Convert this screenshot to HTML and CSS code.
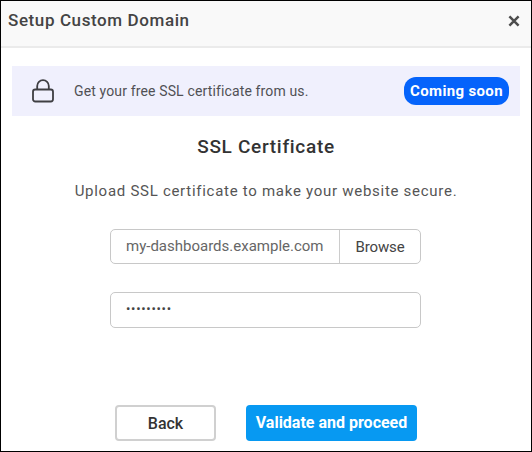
FILE: index.html
```html
<!DOCTYPE html>
<html lang="en">
<head>
<meta charset="utf-8">
<title>Setup Custom Domain</title>
<link rel="stylesheet" href="styles.css">
</head>
<body>
<div class="dialog">
  <header class="header">
    <h1 class="title">Setup Custom Domain</h1>
    <svg class="close" width="12" height="12" viewBox="0 0 12 12"><path d="M1.4 1.4 10.6 10.6M10.6 1.4 1.4 10.6"/></svg>
  </header>
  <div class="banner">
    <svg class="lock" width="22" height="24" viewBox="0 0 22 24"><rect x="1" y="10.5" width="20" height="12" rx="2.2"/><path d="M5.2 10.5V7a5.8 5.8 0 0 1 11.6 0v3.5"/></svg>
    <span class="banner-text">Get your free SSL certificate from us.</span>
    <span class="pill">Coming soon</span>
  </div>
  <h2 class="heading">SSL Certificate</h2>
  <p class="hint">Upload SSL certificate to make your website secure.</p>
  <div class="field file">
    <span class="file-name">my-dashboards.example.com</span>
    <span class="browse">Browse</span>
  </div>
  <div class="field password">•••••••••</div>
  <div class="actions">
    <button class="button back">Back</button>
    <button class="button proceed">Validate and proceed</button>
  </div>
</div>
</body>
</html>
```
FILE: styles.css
```css
* { box-sizing: border-box; }
body { margin: 0; font-family: Roboto, "Liberation Sans", sans-serif; color: #444; }
.dialog { width: 532px; height: 452px; border: 1px solid #000; background: #fff; overflow: hidden; white-space: nowrap; }
.header { height: 47px; display: flex; align-items: flex-start; justify-content: space-between; padding: 8px 11px 0 7px; background: #f9f9f9; border-bottom: 2px solid #ebebeb; }
.title { margin: 0; font-size: 17px; line-height: 22px; font-weight: 500; letter-spacing: .6px; color: #444; }
.close { margin-top: 6px; fill: none; stroke: #4d4d4d; stroke-width: 2.5; }
.banner { height: 50px; margin: 18px 11px 0; padding: 0 11px 0 20px; display: flex; align-items: center; background: #f0f0fd; }
.lock { fill: none; stroke: #3e3e42; stroke-width: 1.8; }
.banner-text { margin-left: 20px; font-size: 14px; line-height: 20px; letter-spacing: .14px; color: #505055; }
.pill { width: 105px; height: 28px; margin-left: auto; border-radius: 12px; background: #0563fb; color: #fff; font-size: 15px; line-height: 28px; font-weight: 700; letter-spacing: .35px; text-align: center; }
.heading { margin: 18px 0 0; font-size: 19px; line-height: 26px; font-weight: 500; letter-spacing: .7px; color: #333; text-align: center; }
.hint { margin: 20px 0 0; font-size: 15px; line-height: 22px; letter-spacing: .72px; color: #555; text-align: center; }
.field { width: 311px; height: 35px; margin-left: 109px; border: 1px solid #c8c8c8; border-radius: 5px; display: flex; }
.file { margin-top: 27px; }
.file-name { width: 229px; padding-left: 15px; font-size: 15px; line-height: 33px; letter-spacing: 0; color: #666; border-right: 1px solid #ccc; }
.browse { flex: 1; text-align: center; font-size: 15px; line-height: 34px; letter-spacing: -.1px; color: #444; }
.password { height: 36px; margin-top: 28px; padding-left: 15px; font-size: 13px; line-height: 32px; letter-spacing: .7px; color: #444; }
.actions { display: flex; gap: 30px; margin: 77px 0 0 114px; }
.button { height: 36px; padding: 0; border-radius: 4px; font-family: inherit; font-size: 16px; line-height: 34px; }
.back { width: 101px; border: 2px solid #d0d0d0; background: #fff; color: #333; font-weight: 500; }
.proceed { width: 171px; border: 0; background: #0799f2; color: #fff; font-weight: 700; }
```
